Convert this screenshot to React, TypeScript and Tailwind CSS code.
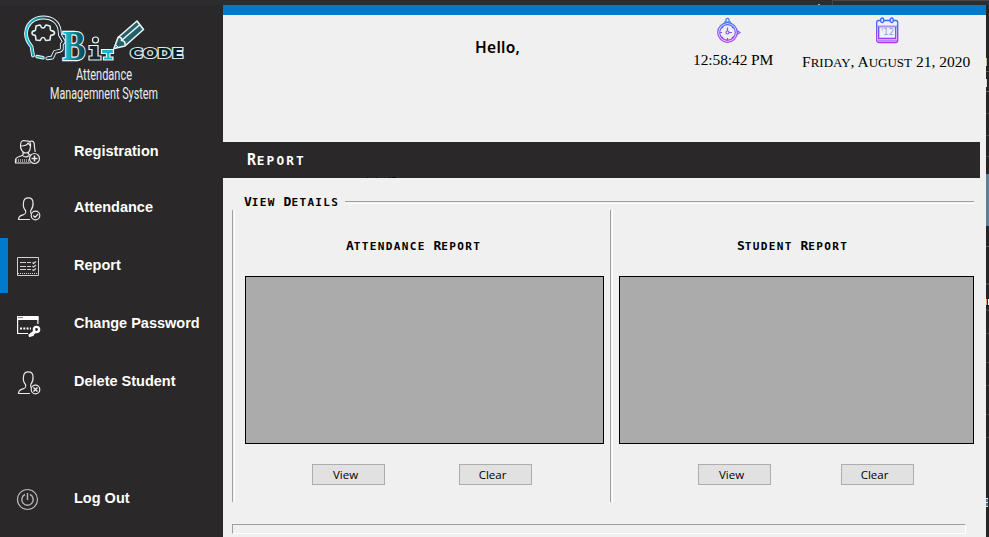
import type { ReactNode } from "react";

const headPath = "M33 55.500l-1.500-9c-3.500-4-5.500-8-5.500-13 .5-10 8-16 17.500-16 9 0 15 5 16 12.500l.5 5 3.800 6.500c0 1.500-2 1.500-2 2.500v5c-.3 2.500-5 2-7 3l-2.500 5.500-5 .8";

function Logo() {
  return (
    <svg width="223" height="105" viewBox="0 5 223 105" className="block">
      <defs>
        <linearGradient id="teal" x1="0" x2="1">
          <stop offset="0" stopColor="#17d3e3" />
          <stop offset="1" stopColor="#0b3945" />
        </linearGradient>
        <linearGradient id="fade" x1="0" x2="1">
          <stop offset="0" stopColor="#18c8dc" />
          <stop offset="0.7" stopColor="#1f2b33" />
        </linearGradient>
      </defs>
      <g fill="none" strokeLinejoin="round" strokeLinecap="round">
        <path d={headPath} stroke="#f4f8f8" strokeWidth="3.800" />
        <path d={headPath} stroke="url(#fade)" strokeWidth="2" />
        <path d="M37 56.500l6 1.300" stroke="#f4f8f8" strokeWidth="3.500" />
        <path d="M37 56.500l6 1.300" stroke="#18b5c8" strokeWidth="1.600" />
        <path d="M36 26l4-1c1.500 0 0 3 3 3s1.500-3 3-3l4 1 .5 4c0 1.500 4 0 4 3s-4 1.500-4 3l-.5 4-4 .5c-1.500 0 0-3-3-3s-1.500 3-3 3l-4-.5-.5-4c0-1.500-3.500 0-3.500-3s3.500-1.500 3.500-3z" stroke="#dff3f3" strokeWidth="1.600" />
      </g>
      <text x="62.500" y="60" textLength="23" lengthAdjust="spacingAndGlyphs" fontFamily="Liberation Serif, serif" fontWeight="700" fontSize="43" fill="url(#teal)" stroke="#f3f7f7" strokeWidth="2.400" paintOrder="stroke">B</text>
      <g fill="#15282f" stroke="#f3f7f7" strokeWidth="1.200">
        <circle cx="95.500" cy="40" r="3" />
        <path d="M89 45.500h9v10.500h3v4H89v-4h3v-6.500h-3z" />
      </g>
      <path d="M101.500 49.500h12v4h-3.500v3.500h3v3h-9.500v-3h3v-3.500h-5z" fill="#19b5ce" stroke="#f3f7f7" strokeWidth="1.200" />
      <g stroke="#edf5f5" strokeWidth="1.600" strokeLinejoin="round">
        <path d="M114 48.500l4-11 19-16.500 6.500 8.500-18.500 16.500z" fill="#24616a" />
        <path d="M118 37.500c3-1 4 1 3.500 3 3 0 4 2 3.500 5M121.500 40.500l18-15.500" fill="none" />
        <path d="M114 48.500l1.500-4 2.500 2.500z" fill="#15b4c8" strokeWidth="1" />
      </g>
      <text x="130" y="57.800" textLength="53.500" lengthAdjust="spacingAndGlyphs" fontFamily="DejaVu Sans, sans-serif" fontWeight="700" fontSize="14.500" fill="#101d25" stroke="#dfe8e9" strokeWidth="2.200" paintOrder="stroke">CODE</text>
      <g fill="#ececec" fontFamily="Roboto, sans-serif" fontSize="16.500">
        <text x="76" y="80" textLength="56" lengthAdjust="spacingAndGlyphs">Attendance</text>
        <text x="50" y="98.500" textLength="108" lengthAdjust="spacingAndGlyphs">Managemnent System</text>
      </g>
    </svg>
  );
}

function Icon({ children, stroke = "#e8e8e8" }: { children: ReactNode; stroke?: string }) {
  return (
    <svg width="28" height="28" viewBox="0 0 28 28" fill="none" stroke={stroke} strokeWidth="1.2" strokeLinejoin="round" className="block shrink-0">
      {children}
    </svg>
  );
}

const person = "M16 24.500H4.500c.2-3 1.500-3.600 4.500-4.600 3-1 3.200-2 2.500-4.400C9.200 13 9 10.500 9.500 7.500 10 1.300 18.800 1.300 19 7.500c.4 3.500-.3 5.500-2.200 8-.4 1.500 0 2.500.4 3.200";

function RegistrationIcon() {
  return (
    <Icon>
      <path d="M6.500 5.500C7 1 10 1.300 12 2c4-.6 5 2 4.500 5.500-.3 4-2 6.500-4.700 6.500C8.500 14 6 10 6.500 5.500zM7 7c3 0 6-1 7-3l2.500 3M15.500 2.500C20 1 20.500 4 20.500 8l.7 5M9 13v3c-3 2-7.500 1.500-7.500 5v3h15M14.500 13v2l3 2M8 16c2 2.500 5 2.500 7 .5" />
      <path d="M2 21.500h14" strokeDasharray="1 1" strokeWidth="3" stroke="#999" />
      <circle cx="20.500" cy="19.500" r="5" fill="#2a2829" />
      <path d="M20.500 16.500v6M17.500 19.500h6" strokeWidth="1.500" />
    </Icon>
  );
}

function AttendanceIcon() {
  return (
    <Icon>
      <path d={person} />
      <circle cx="21.500" cy="20.500" r="4.300" fill="#2a2829" />
      <path d="M19.300 20.500l1.800 1.800 3-3.300" />
    </Icon>
  );
}

function ReportIcon() {
  return (
    <Icon stroke="#d2d2d2">
      <path d="M3.500 4.500h21v18h-21z" strokeWidth="1" />
      <path d="M4 20.500h20" strokeDasharray="1 1" strokeWidth="1" />
      <path d="M6 9.500h11M6 13.500h11M6 16.500h11" strokeDasharray="6 1" />
      <path d="M18.500 9.500l1 1 2.500-2M18.500 13l1 1 2.500-2M18.500 16.500l1 1 2.500-2" />
    </Icon>
  );
}

function PasswordIcon() {
  return (
    <Icon stroke="#fff">
      <path d="M14 22.500H3.600V6h20.300v7" />
      <path d="M3 5h21.500v4H3z" fill="#fff" stroke="none" />
      <path d="M4 6.500h5" stroke="#888" />
      <path d="M6 17.500h11" strokeDasharray="2 1.300" strokeWidth="2" />
      <path d="M20 20l-5 4 .5 1.500 3.500-1 1-2 3-2" fill="#fff" />
      <circle cx="22.500" cy="18.500" r="2.600" strokeWidth="2.400" />
    </Icon>
  );
}

function DeleteIcon() {
  return (
    <Icon>
      <path d={person} />
      <circle cx="21.500" cy="20.500" r="4.300" fill="#2a2829" />
      <path d="M19.500 18.500l4 4M23.500 18.500l-4 4" strokeWidth="1.500" />
    </Icon>
  );
}

function PowerIcon() {
  return (
    <Icon stroke="#b9b9b9">
      <circle cx="13.500" cy="13.500" r="10" />
      <path d="M11 8.500a5.700 5.700 0 1 0 5 0M13.500 7v7" strokeWidth="1.400" />
    </Icon>
  );
}

function NavItem({ icon, label, active = false, className = "" }: { icon: ReactNode; label: string; active?: boolean; className?: string }) {
  return (
    <div className={`flex h-[55px] items-center ${className}`}>
      <span className={`h-full w-2 shrink-0 ${active ? "bg-[#007acc]" : ""}`} />
      <span className="ml-1.5 flex w-[60px] shrink-0 pt-0.5">{icon}</span>
      <span className="pb-0.5 font-['Liberation_Sans',sans-serif] text-[14.5px] leading-5 font-bold whitespace-nowrap text-white">{label}</span>
    </div>
  );
}

// Monospaced small capitals: the first letter of each word is taller.
function Caps({ text, className = "" }: { text: string; className?: string }) {
  return (
    <span className={`font-['DejaVu_Sans_Mono',monospace] font-bold whitespace-pre ${className}`}>
      {text.split(" ").map((word, i) => (
        <span key={i}>
          {i > 0 && " "}
          {word[0]}
          <span className="text-[0.85em] tracking-[0.12em]">{word.slice(1).toUpperCase()}</span>
        </span>
      ))}
    </span>
  );
}

function Button({ children }: { children: ReactNode }) {
  return (
    <button className="flex h-[21px] w-[73px] items-center justify-center border border-[#adadad] bg-[#e1e1e1] pr-1.5 font-['Open_Sans',sans-serif] text-[11.5px] leading-none text-black">
      {children}
    </button>
  );
}

function VerticalRule() {
  return (
    <div className="flex h-[292px] w-[3px] shrink-0 border-l border-[#a0a0a0]">
      <div className="ml-px w-px bg-white" />
    </div>
  );
}

function StopwatchIcon() {
  return (
    <svg width="26" height="28" viewBox="0 0 26 28" fill="none" stroke="url(#watch)" strokeWidth="1.200" className="block">
      <defs>
        <linearGradient id="watch" gradientUnits="userSpaceOnUse" x1="0" y1="0" x2="0" y2="27">
          <stop stopColor="#2684ff" />
          <stop offset="1" stopColor="#bd35f2" />
        </linearGradient>
      </defs>
      <circle cx="10.500" cy="15.500" r="9.800" />
      <circle cx="10.500" cy="15.500" r="7.800" />
      <circle cx="10.500" cy="15.500" r="1.500" />
      <path d="M9 5V2.500c0-1.500 3-1.500 3 0V5M7 5.200h7M10.500 10.500V14M12 15.500h3M10.500 21v2M3 15.500h2M5 10l1 1M16 10l-1 1M5 21l1-1M16 21l-1-1M20.500 14l2.500 1.500-2.500 1.500z" />
    </svg>
  );
}

function CalendarIcon() {
  return (
    <svg width="24" height="28" viewBox="0 0 24 28" fill="none" stroke="url(#cal)" strokeWidth="1.300" className="block">
      <defs>
        <linearGradient id="cal" gradientUnits="userSpaceOnUse" x1="0" y1="0" x2="0" y2="27">
          <stop stopColor="#1976ff" />
          <stop offset="1" stopColor="#b92ff5" />
        </linearGradient>
      </defs>
      <rect x="0.700" y="3.500" width="21" height="22" rx="2" />
      <path d="M1.500 9.500h19.500M1.500 23.800h19.500" stroke="#b38af7" strokeWidth="2" />
      <path d="M2.700 10v11.500h17V10" />
      <rect x="4.700" y="1" width="3" height="4.500" rx="1.500" fill="#efefef" />
      <rect x="14.200" y="1" width="3" height="4.500" rx="1.500" fill="#efefef" />
      <text x="5" y="18" fontFamily="DejaVu Sans, sans-serif" fontSize="9" textLength="13" lengthAdjust="spacingAndGlyphs" stroke="none" fill="#7f9ff2">'12</text>
    </svg>
  );
}

function DateCaps() {
  return (
    <div className="mt-[5px] font-['Liberation_Serif',serif] text-[15.5px] leading-6 whitespace-nowrap">
      F<span className="text-[13px]">RIDAY</span>, A<span className="text-[13px]">UGUST</span> 21, 2020
    </div>
  );
}

export default function App() {
  return (
    <div className="flex h-[537px] w-[989px] flex-col overflow-hidden bg-[#2d2d30]">
      <div className="flex h-[5px] shrink-0">
        <div className="mt-1 ml-[818px] h-px w-0.5 bg-[#aaa]" />
        <div className="ml-3 w-[157px] border-t border-l border-[#46464a]" />
      </div>
      <div className="flex h-[532px]">
        <aside className="flex w-[223px] shrink-0 flex-col bg-[#2a2829]">
          <Logo />
          <nav className="mt-3.5">
            <NavItem icon={<RegistrationIcon />} label="Registration" />
            <NavItem icon={<AttendanceIcon />} label="Attendance" className="mt-px" />
            <NavItem icon={<ReportIcon />} label="Report" active className="mt-[3px]" />
            <NavItem icon={<PasswordIcon />} label="Change Password" className="mt-[3px]" />
            <NavItem icon={<DeleteIcon />} label="Delete Student" className="mt-[3px]" />
            <NavItem icon={<PowerIcon />} label="Log Out" className="mt-[62px]" />
          </nav>
        </aside>

        <main className="w-[763px] shrink-0 bg-[#f0f0f0] text-black">
          <div className="h-2.5 bg-[#007acc]" />
          <header className="flex h-[127px]">
            <h1 className="mt-5 ml-[252px] w-[218px] font-['Noto_Sans',sans-serif] text-[15.5px] leading-6 font-semibold tracking-[0.3px]">Hello,</h1>
            <div className="w-[109px] pt-[2px]">
              <div className="ml-6"><StopwatchIcon /></div>
              <div className="mt-[3px] font-['Liberation_Serif',serif] text-[15.5px] leading-6 tracking-[-0.1px] whitespace-nowrap">12:58:42 PM</div>
            </div>
            <div className="pt-[2px]">
              <div className="ml-[74px]"><CalendarIcon /></div>
              <DateCaps />
            </div>
          </header>
          <div className="flex h-9 w-[757px] items-center overflow-hidden bg-[#2a2829] pl-6 text-white">
            <Caps text="Report" className="w-[119px] text-[15px] leading-5 tracking-[0.8px] [&>span>span]:tracking-[2.1px]" />
            <span className="mt-[41px] font-['Open_Sans',sans-serif] text-[11px] leading-4 text-black">label2</span>
          </div>

          <section className="pl-[9px]">
            <div className="flex h-8 pt-[15px]">
              <Caps text="View Details" className="ml-3 w-[101px] shrink-0 text-[13px] leading-[18px]" />
              <div className="mt-2 h-[3px] w-[629px] border-t border-b border-t-[#a0a0a0] border-b-white" />
            </div>
            <div className="flex">
              <div className="flex w-[378px] shrink-0">
                <VerticalRule />
                <div className="ml-2.5">
                  <h2 className="h-[66px] pt-[26px] pl-[101px] leading-none"><Caps text="Attendance Report" className="text-[13px] leading-[18px]" /></h2>
                  <div className="h-[168px] w-[359px] border border-black bg-[#ababab]" />
                  <div className="mt-5 ml-[67px] flex gap-[74px]">
                    <Button>View</Button>
                    <Button>Clear</Button>
                  </div>
                </div>
              </div>
              <div className="flex">
                <VerticalRule />
                <div className="ml-1.5">
                  <h2 className="h-[66px] pt-[26px] pl-[118px] leading-none"><Caps text="Student Report" className="text-[13px] leading-[18px]" /></h2>
                  <div className="h-[168px] w-[355px] border border-black bg-[#ababab]" />
                  <div className="mt-5 ml-[79px] flex gap-[70px]">
                    <Button>View</Button>
                    <Button>Clear</Button>
                  </div>
                </div>
              </div>
            </div>
            <div className="mt-[22px] h-2.5 w-[734px] border border-t-[#a0a0a0] border-r-white border-b-white border-l-[#a0a0a0]" />
          </section>
        </main>

        <div className="flex w-[3px] flex-col overflow-hidden bg-[#252526]">
          <div className="mt-[53px] h-2 w-px bg-[#d1bd91]" />
          <div className="mt-[5px] h-px bg-[#555]" />
          <div className="mt-[7px] h-2 w-px bg-[#ddd]" />
          <div className="mt-1 h-px bg-[#666]" />
          <div className="mt-[21px] h-px bg-[#444]" />
          <div className="mt-[21px] h-px bg-[#444]" />
          <div className="mt-[20px] h-px bg-[#444]" />
          <div className="mt-[17px] h-[52px] bg-[#5b8099]" />
          <div className="mt-5 h-px bg-[#555]" />
          <div className="mt-9 h-0.5 bg-[#3e3e42]" />
          <div className="mt-3.5 h-1.5 bg-[linear-gradient(to_right,#e0a070_33%,#24246e_33%,#24246e_66%,#d8f4ff_66%)]" />
          <div className="mt-1 h-0.5 bg-[#3e3e42]" />
          <div className="mt-[22px] h-px bg-[#444]" />
          <div className="mt-7 h-px bg-[#444]" />
          <div className="mt-[22px] h-px bg-[#444]" />
          <div className="mt-7 h-px bg-[#444]" />
          <div className="mt-[22px] h-px bg-[#444]" />
          <div className="mt-[60px] h-[9px] w-0.5 bg-[repeating-linear-gradient(to_bottom,#ddd_0_1px,#4b6fa1_1px_4px)]" />
        </div>
      </div>
    </div>
  );
}
